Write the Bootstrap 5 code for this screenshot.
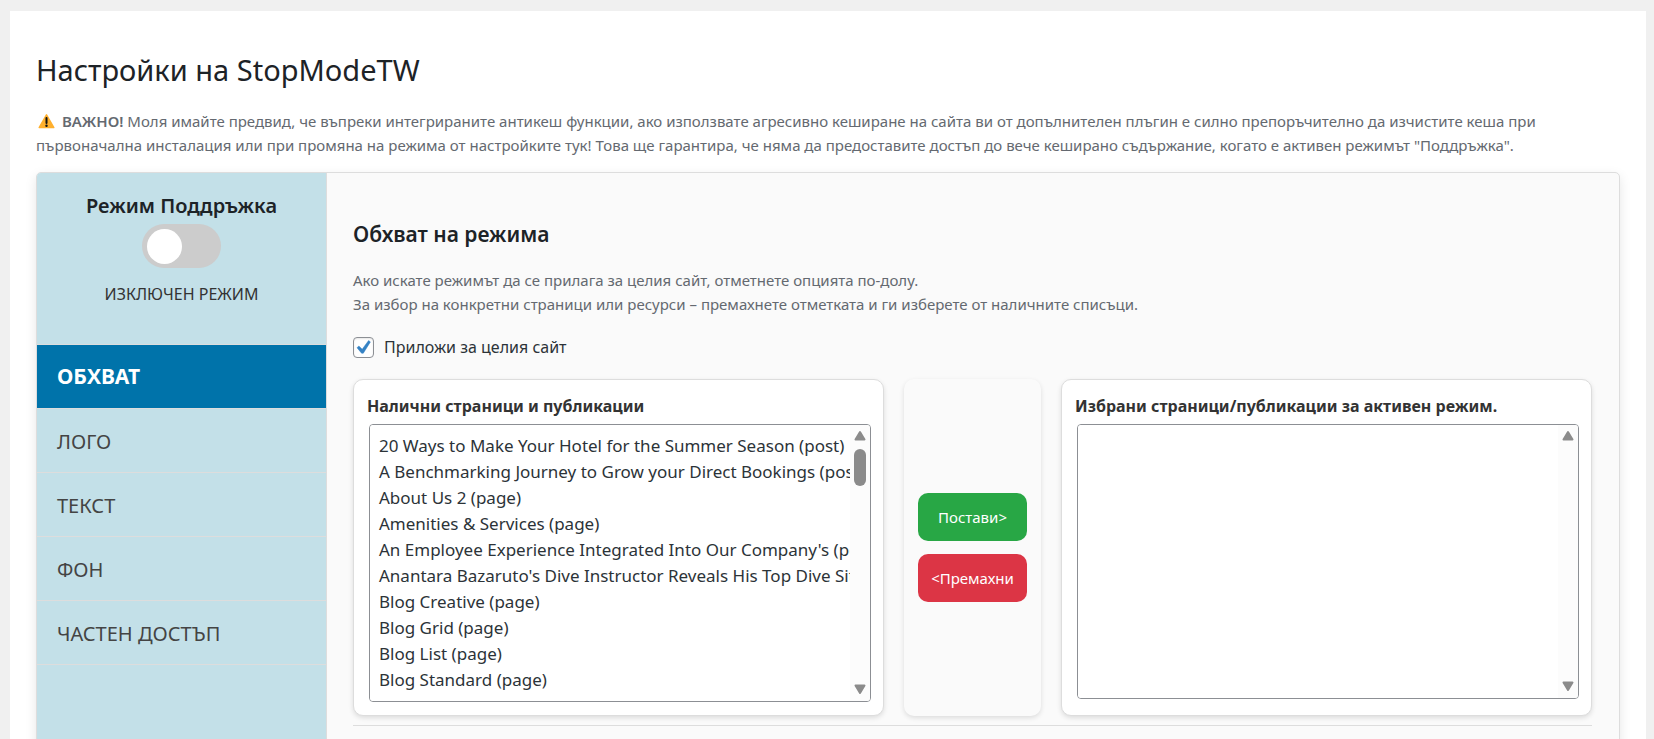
<!DOCTYPE html>
<html lang="bg">
<head>
<meta charset="utf-8">
<meta name="viewport" content="width=device-width, initial-scale=1">
<title>Настройки на StopModeTW</title>
<link href="https://cdn.jsdelivr.net/npm/bootstrap@5.3.0/dist/css/bootstrap.min.css" rel="stylesheet">
<style>
  body { background: #f0f0f0; color: #2c3338; font-family: "Noto Sans", "Open Sans", sans-serif; }
  .page-panel { background: #fff; margin: 11px 8px 0 10px; padding: 41px 26px 26px; }
  h1, h2, h3 { color: #1d2327; margin: 0; }
  h1 { font-size: 29px; font-weight: 400; line-height: 36px; }
  h2 { font-size: 21px; font-weight: 600; line-height: 28px; }
  h3 { font-size: 20px; font-weight: 600; line-height: 28px; }
  .hint { color: #646970; font-size: 15px; line-height: 24px; margin: 0; }
  .hint strong { font-weight: 600; }
  .notice-text { margin: 21px 0 15px; }
  .warn-icon { width: 17px; height: 16px; vertical-align: -2px; margin: 0 3px 0 2px; }
  .settings-box { border: 1px solid #ddd; border-radius: 5px; background: #fafafa; box-shadow: 0 4px 12px rgba(0,0,0,.1); overflow: hidden; }
  .side { background: #c3e0e8; border-right: 1px solid #ddd; width: 290px; }
  .mode-block { height: 172px; padding-top: 19px; border-bottom: 1px solid #ddd; }
  .mode-switch.form-check-input { width: 79px; height: 44px; margin: 4px 0 0; float: none; border: 0; background-color: #ccc; background-size: 35px 35px; background-position: 5px 5px;
    --bs-form-switch-bg: url("data:image/svg+xml,%3csvg xmlns='http://www.w3.org/2000/svg' viewBox='-4 -4 8 8'%3e%3ccircle r='4' fill='%23fff'/%3e%3c/svg%3e"); }
  .mode-state { font-size: 16px; line-height: 24px; margin-top: 14px; color: #333; }
  .side .nav-link { color: #444; font-size: 20px; line-height: 29px; padding: 18px 20px 16px; border-bottom: 1px solid #ddd; }
  .side .nav-link.active { background: #0073aa; color: #fff; font-size: 21px; font-weight: 700; padding: 17px 20px; }
  .main-area { padding: 47px 27px 48px 26px; }
  .scope-text { margin-top: 20px; }
  .scope-check { margin: 19px 0 20px; gap: 10px; }
  .scope-check .form-check-input { width: 21px; height: 21px; margin: 0; border: 1px solid #8c8f94; border-radius: 4px; box-shadow: inset 0 1px 2px rgba(0,0,0,.1); background-color: #fff; background-size: 21px 21px; }
  .scope-check .form-check-input:checked[type=checkbox] { background-image: url("data:image/svg+xml,%3csvg xmlns='http://www.w3.org/2000/svg' viewBox='0 0 21 21'%3e%3cpath d='M15.600 3.600L17.400 4.900L10.300 16.200H8.600L4 10.700L5.900 9.100L9.200 12.200z' fill='%233582c4' stroke='%233582c4' stroke-width='.5'/%3e%3c/svg%3e"); }
  .scope-check label { font-size: 16px; line-height: 24px; }
  .transfer { gap: 20px; }
  .pane { background: #fff; border: 1px solid #ddd; border-radius: 10px; box-shadow: 0 2px 5px rgba(0,0,0,.12); padding: 14px 12px 13px 13px; flex: 1 1 0; min-width: 0; }
  .pane label { color: #333; font-size: 16px; font-weight: 700; line-height: 24px; margin-bottom: 6px; }
  .list-frame { border: 1px solid #8c8f94; border-radius: 4px; margin-left: 2px; height: 278px; overflow: hidden; }
  .list-frame.short-frame { height: 275px; }
  .list-frame select { border: 0; padding: 9px 0 0 6px; color: #2c3338; font-size: 17px; background: #fff; outline: 0; min-width: 0; }
  .list-frame option { padding: 0 3px; line-height: 26px; min-height: 26px; }
  .rail { width: 20px; background: #fcfcfc; padding: 5px 0 6px; }
  .rail svg { width: 12px; height: 11px; fill: #8b8b8b; stroke: #8b8b8b; stroke-width: 2; stroke-linejoin: round; }
  .rail-thumb { width: 12px; height: 37px; border-radius: 6px; background: #8b8b8b; margin-top: 8px; }
  .move-pane { border-radius: 10px; box-shadow: 0 2px 5px rgba(0,0,0,.12); padding: 0 14px; gap: 13px; width: 137px; }
  .move-pane .btn { border: 0; border-radius: 10px; color: #fff; font-size: 15px; line-height: 24px; padding: 12px 0; }
  .btn-put, .btn-put:hover { background: #28a745; }
  .btn-drop, .btn-drop:hover { background: #dc3545; }
  .divider { margin: 9px 0 0; border-top: 1px solid #ddd; opacity: 1; }
</style>
</head>
<body>
<div class="page-panel">
  <h1>Настройки на StopModeTW</h1>
  <p class="hint notice-text"><svg class="warn-icon" viewBox="0 0 17 16" aria-hidden="true"><path d="M8.500 1.800L15.800 14.600H1.200z" fill="#ffb02e" stroke="#ffb02e" stroke-width="1.500" stroke-linejoin="round"/><path d="M8.500 5v5" stroke="#111" stroke-width="2" stroke-linecap="round"/><circle cx="8.500" cy="12.800" r="1.200" fill="#111"/></svg> <strong>ВАЖНО!</strong> Моля имайте предвид, че въпреки интегрираните антикеш функции, ако използвате агресивно кеширане на сайта ви от допълнителен плъгин е силно препоръчително да изчистите кеша при първоначална инсталация или при промяна на режима от настройките тук! Това ще гарантира, че няма да предоставите достъп до вече кеширано съдържание, когато е активен режимът "Поддръжка".</p>
  <div class="settings-box d-flex">
    <aside class="side flex-shrink-0">
      <div class="mode-block form-switch text-center ps-0">
        <h3><label for="mode">Режим Поддръжка</label></h3>
        <input class="form-check-input mode-switch d-block mx-auto" type="checkbox" role="switch" id="mode">
        <div class="mode-state">ИЗКЛЮЧЕН РЕЖИМ</div>
      </div>
      <nav class="nav flex-column">
        <a class="nav-link active" href="#scope">ОБХВАТ</a>
        <a class="nav-link" href="#logo">ЛОГО</a>
        <a class="nav-link" href="#text">ТЕКСТ</a>
        <a class="nav-link" href="#background">ФОН</a>
        <a class="nav-link" href="#private">ЧАСТЕН ДОСТЪП</a>
      </nav>
    </aside>
    <main class="main-area flex-grow-1">
      <h2>Обхват на режима</h2>
      <p class="hint scope-text">Ако искате режимът да се прилага за целия сайт, отметнете опцията по-долу.<br>За избор на конкретни страници или ресурси – премахнете отметката и ги изберете от наличните списъци.</p>
      <div class="scope-check d-flex align-items-center">
        <input class="form-check-input" type="checkbox" id="whole" checked>
        <label for="whole">Приложи за целия сайт</label>
      </div>
      <div class="transfer d-flex">
        <div class="pane">
          <label class="d-block" for="available">Налични страници и публикации</label>
          <div class="list-frame d-flex">
            <select class="flex-grow-1" id="available" multiple>
              <option>20 Ways to Make Your Hotel for the Summer Season (post)</option>
              <option>A Benchmarking Journey to Grow your Direct Bookings (post)</option>
              <option>About Us 2 (page)</option>
              <option>Amenities &amp; Services (page)</option>
              <option>An Employee Experience Integrated Into Our Company's (post)</option>
              <option>Anantara Bazaruto's Dive Instructor Reveals His Top Dive Sites (post)</option>
              <option>Blog Creative (page)</option>
              <option>Blog Grid (page)</option>
              <option>Blog List (page)</option>
              <option>Blog Standard (page)</option>
            </select>
            <div class="rail d-flex flex-column align-items-center flex-shrink-0" aria-hidden="true">
              <svg viewBox="0 0 12 11"><path d="M6 2L10.500 9.500h-9z"/></svg>
              <div class="rail-thumb"></div>
              <svg class="mt-auto" viewBox="0 0 12 11"><path d="M6 9L10.500 1.500h-9z"/></svg>
            </div>
          </div>
        </div>
        <div class="move-pane d-flex flex-column justify-content-center flex-shrink-0">
          <button type="button" class="btn btn-put">Постави&gt;</button>
          <button type="button" class="btn btn-drop">&lt;Премахни</button>
        </div>
        <div class="pane">
          <label class="d-block" for="chosen">Избрани страници/публикации за активен режим.</label>
          <div class="list-frame short-frame d-flex">
            <select class="flex-grow-1" id="chosen" multiple></select>
            <div class="rail d-flex flex-column align-items-center flex-shrink-0" aria-hidden="true">
              <svg viewBox="0 0 12 11"><path d="M6 2L10.500 9.500h-9z"/></svg>
              <svg class="mt-auto" viewBox="0 0 12 11"><path d="M6 9L10.500 1.500h-9z"/></svg>
            </div>
          </div>
        </div>
      </div>
      <hr class="divider">
    </main>
  </div>
</div>
<script src="https://cdn.jsdelivr.net/npm/bootstrap@5.3.0/dist/js/bootstrap.bundle.min.js"></script>
</body>
</html>
